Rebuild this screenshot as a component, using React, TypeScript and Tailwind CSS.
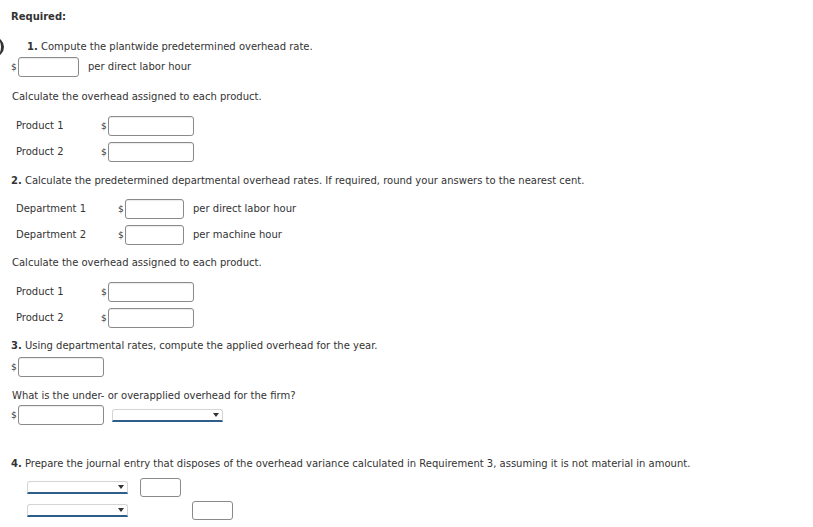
import React from "react";

const Input = ({ w }: { w: string }) => (
  <div className={`${w} h-[20px] border border-[#8a8a8a] rounded-[3px] bg-white shadow-[inset_0_1px_1px_rgba(0,0,0,0.08)]`} />
);

const Money = ({ w, dollarW = "w-[7px]" }: { w: string; dollarW?: string }) => (
  <div className="flex items-center">
    <span className={`${dollarW} text-[9px] text-[#333] leading-none`}>$</span>
    <Input w={w} />
  </div>
);

const Select = ({ w }: { w: string }) => (
  <div className={`${w} h-[13px] relative bg-white border border-[#d4d4d4] border-b-[2px] border-b-[#2d5f8a] rounded-t-[3px]`}>
    <span className="absolute right-[3px] top-[3px] w-0 h-0 border-l-[3px] border-r-[3px] border-t-[4px] border-l-transparent border-r-transparent border-t-[#333]" />
  </div>
);

export default function App() {
  return (
    <div
      className="relative w-[813px] h-[527px] bg-white text-[10px] leading-[12px] text-[#333] overflow-hidden"
      style={{ fontFamily: '"DejaVu Sans", Verdana, sans-serif' }}
    >
      <div className="absolute left-[-8px] top-[37px] w-[12px] h-[20px] border-r-[3px] border-[#333] rounded-r-full" />

      <div className="pt-[11px] pl-[11px] font-bold">Required:</div>

      <div className="mt-[18px] pl-[27px]"><b>1.</b> Compute the plantwide predetermined overhead rate.</div>
      <div className="mt-[4px] pl-[11px] flex items-center h-[20px]">
        <Money w="w-[61px]" />
        <span className="ml-[9px]">per direct labor hour</span>
      </div>

      <div className="mt-[14px] pl-[12px]">Calculate the overhead assigned to each product.</div>
      <div className="mt-[13px] pl-[16px] flex items-center h-[20px]">
        <span className="w-[85px]">Product 1</span>
        <Money w="w-[86px]" />
      </div>
      <div className="mt-[6px] pl-[16px] flex items-center h-[20px]">
        <span className="w-[85px]">Product 2</span>
        <Money w="w-[86px]" />
      </div>

      <div className="mt-[13px] pl-[11px]"><b>2.</b> Calculate the predetermined departmental overhead rates. If required, round your answers to the nearest cent.</div>
      <div className="mt-[12px] pl-[16px] flex items-center h-[20px]">
        <span className="w-[102px]">Department 1</span>
        <Money w="w-[59px]" />
        <span className="ml-[9px]">per direct labor hour</span>
      </div>
      <div className="mt-[6px] pl-[16px] flex items-center h-[20px]">
        <span className="w-[102px]">Department 2</span>
        <Money w="w-[59px]" />
        <span className="ml-[9px]">per machine hour</span>
      </div>

      <div className="mt-[12px] pl-[12px]">Calculate the overhead assigned to each product.</div>
      <div className="mt-[13px] pl-[16px] flex items-center h-[20px]">
        <span className="w-[85px]">Product 1</span>
        <Money w="w-[86px]" />
      </div>
      <div className="mt-[6px] pl-[16px] flex items-center h-[20px]">
        <span className="w-[85px]">Product 2</span>
        <Money w="w-[86px]" />
      </div>

      <div className="mt-[12px] pl-[11px]"><b>3.</b> Using departmental rates, compute the applied overhead for the year.</div>
      <div className="mt-[5px] pl-[11px] flex items-center h-[20px]">
        <Money w="w-[86px]" />
      </div>

      <div className="mt-[13px] pl-[12px]">What is the under- or overapplied overhead for the firm?</div>
      <div className="mt-[3px] pl-[11px] flex items-center h-[20px]">
        <Money w="w-[86px]" />
        <div className="ml-[8px]"><Select w="w-[111px]" /></div>
      </div>

      <div className="mt-[33px] pl-[11px]"><b>4.</b> Prepare the journal entry that disposes of the overhead variance calculated in Requirement 3, assuming it is not material in amount.</div>
      <div className="mt-[8px] pl-[27px] flex items-center h-[19px]">
        <Select w="w-[101px]" />
        <div className="ml-[12px] w-[41px] h-[19px] border border-[#8a8a8a] rounded-[3px]" />
      </div>
      <div className="mt-[4px] pl-[27px] flex items-center h-[19px]">
        <Select w="w-[101px]" />
        <div className="ml-[64px] w-[41px] h-[19px] border border-[#8a8a8a] rounded-[3px]" />
      </div>
    </div>
  );
}
